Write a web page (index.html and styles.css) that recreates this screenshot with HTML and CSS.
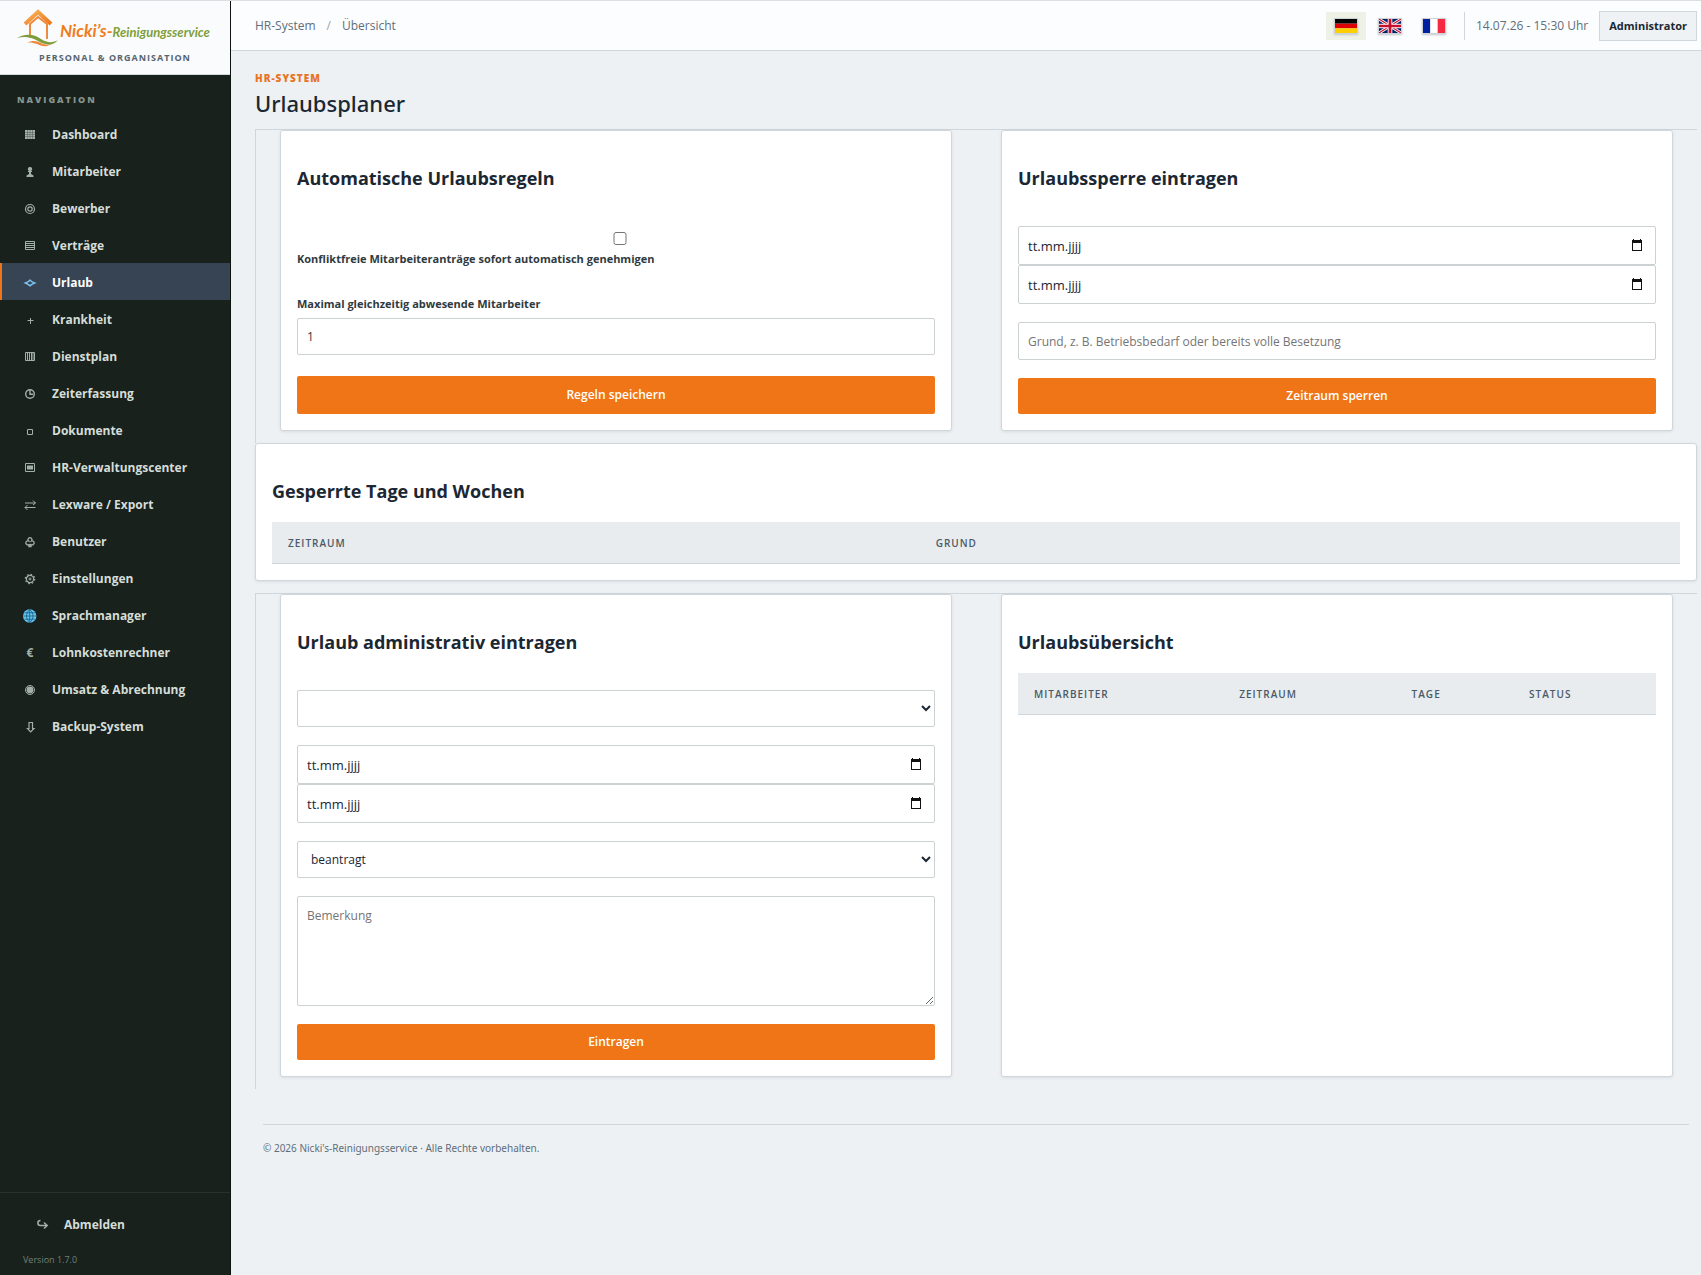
FILE: index.html
```html
<!DOCTYPE html>
<html lang="de">
<head>
<meta charset="utf-8">
<title>Urlaubsplaner – HR-System</title>
<meta name="viewport" content="width=device-width, initial-scale=1">
<link rel="stylesheet" href="styles.css">
</head>
<body>
<div class="app">
  <aside class="sidebar">
    <div class="brand">
      <a class="brand-logo" href="#">
        <svg class="brand-house" viewBox="0 0 41 38" aria-hidden="true">
          <defs>
            <linearGradient id="roof" x1="0" y1="0" x2="1" y2="1"><stop offset="0" stop-color="#f9b25c"/><stop offset="1" stop-color="#ef7415"/></linearGradient>
          </defs>
          <path d="M8 15 L21 3 L34 15" fill="none" stroke="url(#roof)" stroke-width="4"/>
          <path d="M13 29 V15 L21 8 L30 15 V30" fill="none" stroke="#f08a3c" stroke-width="2"/>
          <path d="M0 29 C9 24 17 25 24 30 C30 34 36 34 41 31 C35 38 28 36 21 32 C14 28 8 27 0 29Z" fill="#7e9c3a"/>
          <path d="M10 34 C15 31 20 32 24 34 C28 36 31 36 34 35 C29 39 24 37 20 35 C16 34 13 33 10 34Z" fill="#ef8a3a"/>
        </svg>
        <span class="brand-name"><span class="brand-first">Nicki’s-</span><span class="brand-second">Reinigungsservice</span></span>
      </a>
      <div class="brand-sub">PERSONAL &amp; ORGANISATION</div>
    </div>
    <div class="nav-title">NAVIGATION</div>
    <nav class="nav">
      <a href="#"><svg class="ico" viewBox="0 0 14 14"><rect x="2" y="2" width="10" height="9" fill="currentColor"/><path d="M4.500 2V11M7 2V11M9.500 2V11M2 4.500H12M2 6.500H12M2 8.500H12" stroke="#18211c" stroke-width=".3"/></svg>Dashboard</a>
      <a href="#"><svg class="ico" viewBox="0 0 14 14"><path d="M7 2a2 2 0 0 1 1.500 3.500L8.200 6H9v1H8v2l2.500 1.500V12h-7v-1.500L6 9V7H5V6h.8L5.500 5.500A2 2 0 0 1 7 2Z" fill="currentColor"/></svg>Mitarbeiter</a>
      <a href="#"><svg class="ico" viewBox="0 0 14 14" fill="none" stroke="currentColor" stroke-width="1.200"><circle cx="7" cy="7" r="4.500"/><circle cx="7" cy="7" r="2.200"/></svg>Bewerber</a>
      <a href="#"><svg class="ico" viewBox="0 0 14 14" fill="none" stroke="currentColor"><path d="M2.500 2.500h9v8h-9zM2.500 4.500h9M2.500 6.500h9M2.500 8.500h9"/></svg>Verträge</a>
      <a href="#" class="active" aria-current="page"><svg class="ico" viewBox="0 0 14 14" fill="none" stroke="currentColor" stroke-width="1.600"><path d="M2.500 7Q5.500 5.800 7 4.200Q8.500 5.800 11.500 7Q8.500 8.200 7 9.800Q5.500 8.200 2.500 7Z"/></svg>Urlaub</a>
      <a href="#"><svg class="ico" viewBox="0 0 14 14" stroke="currentColor"><path d="M7.500 5v6M4.500 7.500h6"/></svg>Krankheit</a>
      <a href="#"><svg class="ico" viewBox="0 0 14 14" fill="none" stroke="currentColor"><path d="M2.500 2.500h9v8h-9zM4.500 2.500v8M6.500 2.500v8M8.500 2.500v8M10 2.500v8"/></svg>Dienstplan</a>
      <a href="#"><svg class="ico" viewBox="0 0 14 14" fill="none" stroke="currentColor" stroke-width="1.400"><circle cx="7" cy="7" r="4.300"/><path d="M7 3v4.200h3"/></svg>Zeiterfassung</a>
      <a href="#"><svg class="ico" viewBox="0 0 14 14" fill="none" stroke="currentColor"><path d="M4.500 5.500h5v5h-5z"/></svg>Dokumente</a>
      <a href="#"><svg class="ico" viewBox="0 0 14 14"><path d="M2.500 2.500h9v8h-9z" fill="none" stroke="currentColor"/><path d="M4 4.500h6v4h-6z" fill="currentColor"/></svg>HR-Verwaltungscenter</a>
      <a href="#"><svg class="ico" viewBox="0 0 14 14" fill="none" stroke="currentColor"><path d="M2 5h10.500M10 2.500L12.500 5L10 7M12.500 9.500H2M4.500 7L2 9.500L4.500 12"/></svg>Lexware / Export</a>
      <a href="#"><svg class="ico" viewBox="0 0 14 14" fill="none" stroke="currentColor" stroke-width="1.300"><path d="M5.500 6A2 2 0 1 1 8.500 6A2 2 0 1 1 7.500 9L8 11.500H6L6.500 9A2 2 0 1 1 5.500 6Z"/></svg>Benutzer</a>
      <a href="#"><svg class="ico" viewBox="0 0 14 14" fill="none" stroke="currentColor"><circle cx="7" cy="7" r="3.600" stroke-width="1.200"/><circle cx="7" cy="7" r="1"/><circle cx="7" cy="7" r="4.700" stroke-width="1.200" stroke-dasharray="1.600 2.090"/></svg>Einstellungen</a>
      <a href="#"><svg class="ico" viewBox="0 0 14 14"><circle cx="6.700" cy="7" r="6.700" fill="#5cc8fa"/><path d="M6.700.5v13M.5 7h12.500M1.500 3.800h10.500M1.500 10.200h10.500M6.700.5C2.500 4 2.500 10 6.700 13.500C11 10 11 4 6.700.5" fill="none" stroke="#1f4a63" stroke-width=".7"/></svg>Sprachmanager</a>
      <a href="#"><span class="ico ico-text">€</span>Lohnkostenrechner</a>
      <a href="#"><svg class="ico" viewBox="0 0 14 14"><circle cx="7" cy="7" r="4.500" fill="none" stroke="currentColor"/><circle cx="7" cy="7" r="3.400" fill="currentColor"/></svg>Umsatz &amp; Abrechnung</a>
      <a href="#"><svg class="ico" viewBox="0 0 14 14" fill="none" stroke="currentColor" stroke-width="1.200"><path d="M6 2.500h3.500v6H11L7.700 11.800L4.500 8.500H6z"/></svg>Backup-System</a>
    </nav>
    <div class="side-foot">
      <a class="logout" href="#"><svg class="ico" viewBox="0 0 14 14" fill="none" stroke="currentColor" stroke-width="1.500"><path d="M5.500 2.500C2 2.500 2 7.500 5.500 7.500H12M9 4.500L12.200 7.500L9 10.500"/></svg>Abmelden</a>
      <div class="version">Version 1.7.0</div>
    </div>
  </aside>

  <div class="page">
    <header class="topbar">
      <div class="crumbs"><a href="#">HR-System</a><span class="sep">/</span><span>Übersicht</span></div>
      <div class="tools">
        <div class="langs">
          <button type="button" class="lang current" aria-label="Deutsch"><svg viewBox="0 0 24 16" preserveAspectRatio="none"><path fill="#000" d="M0 0h24v5.330H0z"/><path fill="#d00" d="M0 5.330h24v5.340H0z"/><path fill="#ffce00" d="M0 10.670h24V16H0z"/></svg></button>
          <button type="button" class="lang" aria-label="English"><svg viewBox="0 0 24 16" preserveAspectRatio="none"><path fill="#012169" d="M0 0h24v16H0z"/><path stroke="#fff" stroke-width="3.200" d="M0 0L24 16M24 0L0 16"/><path stroke="#c8102e" stroke-width="1.200" d="M0 0L24 16M24 0L0 16"/><path stroke="#fff" stroke-width="5" d="M12 0V16M0 8H24"/><path stroke="#c8102e" stroke-width="3" d="M12 0V16M0 8H24"/></svg></button>
          <button type="button" class="lang" aria-label="Français"><svg viewBox="0 0 24 16" preserveAspectRatio="none"><path fill="#00209f" d="M0 0h8v16H0z"/><path fill="#fff" d="M8 0h8v16H8z"/><path fill="#f42a41" d="M16 0h8v16h-8z"/></svg></button>
        </div>
        <time class="clock">14.07.26 - 15:30 Uhr</time>
        <button type="button" class="user">Administrator</button>
      </div>
    </header>

    <main class="content">
      <div class="eyebrow">HR-SYSTEM</div>
      <h1>Urlaubsplaner</h1>

      <div class="split">
        <section class="card">
          <h2>Automatische Urlaubsregeln</h2>
          <form class="rules">
            <label class="check"><input type="checkbox"><span>Konfliktfreie Mitarbeiteranträge sofort automatisch genehmigen</span></label>
            <label class="field">Maximal gleichzeitig abwesende Mitarbeiter<input class="control" type="text" inputmode="numeric" value="1"></label>
            <button type="button" class="primary">Regeln speichern</button>
          </form>
        </section>
        <section class="card">
          <h2>Urlaubssperre eintragen</h2>
          <form class="stack">
            <div>
              <div class="date"><input type="text" placeholder="tt.mm.jjjj" aria-label="Von"><button type="button" aria-label="Kalender öffnen"><svg viewBox="0 0 12 13"><path d="M2 0h1v1h6V0h1v1h1v11H1V1h1zM2 4v7h8V4z" fill="#111" fill-rule="evenodd"/></svg></button></div>
              <div class="date"><input type="text" placeholder="tt.mm.jjjj" aria-label="Bis"><button type="button" aria-label="Kalender öffnen"><svg viewBox="0 0 12 13"><path d="M2 0h1v1h6V0h1v1h1v11H1V1h1zM2 4v7h8V4z" fill="#111" fill-rule="evenodd"/></svg></button></div>
            </div>
            <input class="control" type="text" placeholder="Grund, z. B. Betriebsbedarf oder bereits volle Besetzung" aria-label="Grund">
            <button type="button" class="primary">Zeitraum sperren</button>
          </form>
        </section>
      </div>

      <section class="card wide">
        <h2>Gesperrte Tage und Wochen</h2>
        <table class="blocked">
          <thead><tr><th>ZEITRAUM</th><th>GRUND</th></tr></thead>
        </table>
      </section>

      <div class="split">
        <section class="card">
          <h2>Urlaub administrativ eintragen</h2>
          <form class="stack">
            <select class="control" aria-label="Mitarbeiter"><option></option></select>
            <div>
              <div class="date"><input type="text" placeholder="tt.mm.jjjj" aria-label="Von"><button type="button" aria-label="Kalender öffnen"><svg viewBox="0 0 12 13"><path d="M2 0h1v1h6V0h1v1h1v11H1V1h1zM2 4v7h8V4z" fill="#111" fill-rule="evenodd"/></svg></button></div>
              <div class="date"><input type="text" placeholder="tt.mm.jjjj" aria-label="Bis"><button type="button" aria-label="Kalender öffnen"><svg viewBox="0 0 12 13"><path d="M2 0h1v1h6V0h1v1h1v11H1V1h1zM2 4v7h8V4z" fill="#111" fill-rule="evenodd"/></svg></button></div>
            </div>
            <select class="control" aria-label="Status"><option>beantragt</option></select>
            <textarea class="control" placeholder="Bemerkung" aria-label="Bemerkung"></textarea>
            <button type="button" class="primary">Eintragen</button>
          </form>
        </section>
        <section class="card">
          <h2>Urlaubsübersicht</h2>
          <table>
            <thead><tr><th>MITARBEITER</th><th>ZEITRAUM</th><th>TAGE</th><th>STATUS</th></tr></thead>
          </table>
        </section>
      </div>

      <footer class="footer">© 2026 Nicki's-Reinigungsservice · Alle Rechte vorbehalten.</footer>
    </main>
  </div>
</div>
</body>
</html>
```
FILE: styles.css
```css
*, *::before, *::after { box-sizing: border-box; }
body {
  margin: 0;
  background: #edf1f4;
  color: #1b2733;
  font: 12px/18px "Open Sans", "Noto Sans", sans-serif;
}
a { color: inherit; text-decoration: none; }
button, input, select, textarea { font: inherit; color: inherit; margin: 0; }

.app { display: flex; min-height: 100vh; border-top: 1px solid #dcdfe2; }

/* Sidebar */
.sidebar {
  flex: 0 0 231px;
  display: flex;
  flex-direction: column;
  background: #18211c;
  border-right: 1px solid #0c1410;
  color: #d5ddd8;
}
.brand { height: 74px; padding-top: 8px; background: #fafbfd; border-bottom: 1px solid #d3d9dd; }
.brand-logo { display: flex; align-items: center; padding-left: 17px; gap: 2px; }
.brand-house { width: 41px; height: 38px; flex: none; }
.brand-name { font-family: Lato, sans-serif; font-style: italic; font-weight: 700; white-space: nowrap; padding-top: 8px; }
.brand-first { font-size: 17px; color: #f07d1a; }
.brand-second { font-size: 13px; color: #7f9f3a; }
.brand-sub { color: #56646f; font-size: 9px; line-height: 14px; font-weight: 700; letter-spacing: 1px; text-align: center; padding-top: 4px; }
.nav-title { padding: 16px 17px 7px; font-size: 9px; font-weight: 800; letter-spacing: 2px; color: #87938c; line-height: 17px; }
.nav a {
  display: flex;
  align-items: center;
  gap: 15px;
  height: 37px;
  padding-top: 2px;
  padding-left: 21px;
  border-left: 2px solid transparent;
  font-weight: 700;
}
.nav a.active { background: #374453; border-left-color: #f07517; color: #fff; }
.ico { width: 14px; height: 14px; flex: none; color: #a3b0a8; }
.ico-text { text-align: center; line-height: 14px; font-weight: 700; }
.active .ico { color: #7cc3ee; }
.side-foot { margin-top: auto; border-top: 1px solid #28332d; padding: 14px 23px 6px; }
.logout { display: flex; align-items: center; gap: 15px; height: 36px; padding-left: 12px; font-weight: 700; }
.version { color: #728078; font-size: 9px; line-height: 18px; padding-top: 8px; }

/* Top bar */
.page { flex: 1; min-width: 0; }
.topbar {
  display: flex;
  align-items: center;
  justify-content: space-between;
  height: 50px;
  padding: 1px 4px 0 24px;
  background: #fcfdfe;
  border-bottom: 1px solid #d0d7dc;
  color: #5f6e7a;
}
.crumbs { display: flex; gap: 11px; }
.sep { color: #98a3ab; }
.tools { display: flex; align-items: center; gap: 11px; }
.langs { display: flex; gap: 4px; padding-right: 10px; border-right: 1px solid #d0d7dc; }
.lang { display: flex; align-items: center; width: 40px; height: 28px; padding: 0 8px; border: 0; background: none; }
.lang.current { background: #eef2e6; }
.lang svg { width: 24px; height: 16px; border: 1px solid #ccd2d6; box-shadow: 0 1px 2px #c0c6ca; }
.user { height: 30px; padding: 0 9px; border: 1px solid #d0d7dc; background: #eef2f5; color: #1b2733; font-size: 11px; font-weight: 700; }

/* Content */
.content { padding: 18px 4px 24px 24px; }
.eyebrow { color: #e8751f; font-size: 10px; line-height: 18px; font-weight: 800; letter-spacing: 1px; }
h1 { margin: 0; font-family: "Noto Sans", "Open Sans", sans-serif; font-size: 22px; line-height: 32px; font-weight: 500; padding-bottom: 10px; }
h2 { margin: 0; padding: 30px 0 31px; font-size: 18px; line-height: 34px; font-weight: 700; }

.split {
  display: grid;
  grid-template-columns: 1fr 1fr;
  gap: 49px;
  padding: 0 24px 12px;
  border-top: 1px solid #d0d7dc;
  border-left: 1px solid #d0d7dc;
}
.card {
  padding: 0 16px 16px;
  background: #fff;
  border: 1px solid #d0d7dc;
  border-radius: 3px;
  box-shadow: 0 1px 3px rgba(30, 45, 60, .1);
}
.wide { margin-bottom: 12px; }

.stack { display: grid; gap: 18px; }
.rules { display: grid; padding-top: 6px; }
.check, .field { display: block; color: #303a40; font-size: 11px; font-weight: 700; }
.check { padding-bottom: 27px; }
.check input { display: block; width: 100%; height: 13px; margin: 0 0 5px 4px; }
.field { padding-bottom: 21px; }
.field .control { margin-top: 5px; font-size: 12px; font-weight: 400; }

.control, .date { display: block; width: 100%; background: #fff; border: 1px solid #ccd1d3; border-radius: 2px; }
.control { height: 37px; padding: 0 9px; }
.stack input.control { height: 38px; }
.control::placeholder { color: #757575; opacity: 1; }
textarea.control { height: 110px; padding: 10px 9px; resize: vertical; }
.date { display: flex; align-items: center; height: 39px; padding: 0 12px 0 9px; font-size: 13px; }
.date input { flex: 1; min-width: 0; border: 0; padding: 0; background: none; }
.date input::placeholder { color: #1b2733; opacity: 1; }
.date button { display: flex; padding: 0; border: 0; background: none; }
.date svg { width: 12px; height: 13px; }
.primary { height: 36px; border: 0; border-radius: 2px; background: #ef7516; color: #fff; font-weight: 600; }
.rules .primary { height: 38px; }

table { width: 100%; border-collapse: separate; border-spacing: 0; margin-top: -17px; }
th { height: 42px; padding: 0 16px; background: #e8ecef; border-bottom: 1px solid #d0d7dc; color: #4a5a66; font-size: 10px; font-weight: 600; letter-spacing: 1px; text-align: left; }
.blocked th:first-child { width: 46%; }

.footer { margin: 35px 8px 0; padding-top: 14px; border-top: 1px solid #d0d7dc; color: #5f6e7a; font-family: "Noto Sans", "Open Sans", sans-serif; font-size: 10px; }
```
